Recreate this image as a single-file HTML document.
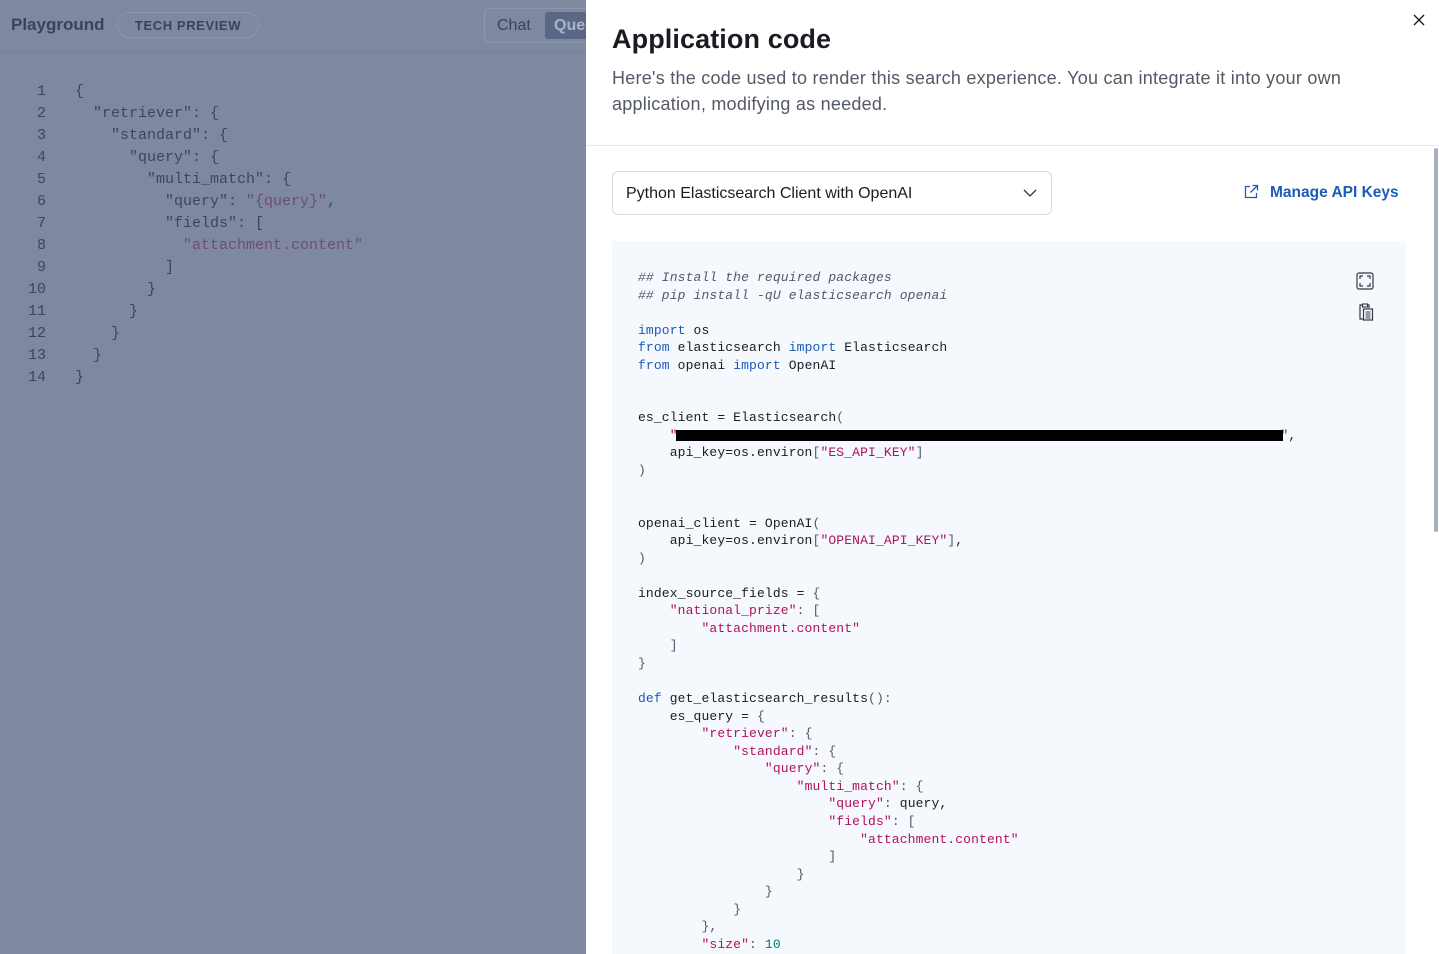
<!DOCTYPE html>
<html><head><meta charset="utf-8">
<style>
*{margin:0;padding:0;box-sizing:border-box}
html,body{width:1439px;height:954px;overflow:hidden}
body{position:relative;font-family:"Liberation Sans",sans-serif;background:#7e89a0}
.left{position:absolute;left:0;top:0;width:586px;height:954px;background:#7e89a0}
.hdr{position:absolute;left:0;top:0;width:586px;height:52px;border-bottom:1px solid #76819a}
.pg{position:absolute;left:11px;top:15px;font-size:17px;font-weight:bold;color:#3b4457}
.tp{position:absolute;left:117px;top:12px;width:142px;height:26px;border:1px solid #8c96ab;border-radius:13px;font-size:13px;font-weight:bold;letter-spacing:0.6px;color:#3b4457;text-align:center;line-height:25px}
.seg{position:absolute;left:484px;top:8px;width:110px;height:35px;border:1px solid #8c96ab;border-radius:5px}
.seg .c{position:absolute;left:12px;top:8px;font-size:16px;color:#3b4457}
.seg .q{position:absolute;left:60px;top:3px;width:50px;height:27px;background:#5a6785;border-radius:3px;color:#aab3c8;font-size:16px;padding:5px 9px;font-weight:bold}
.lc{position:absolute;left:0;top:81px;font-family:"Liberation Mono",monospace;font-size:15px;line-height:22px;color:#3d4659}
.ln{position:absolute;left:22px;width:24px;text-align:right;color:#3d4659}
.lcode{position:absolute;left:75px;white-space:pre;color:#3d4659}
.ls{color:#6d4d72}
.gut{position:absolute;left:59px;top:70px;width:1px;height:320px;background:#7a859c}
.panel{position:absolute;left:586px;top:0;width:853px;height:954px;background:#fff;overflow:hidden}
h1{position:absolute;left:26px;top:24px;font-size:27px;font-weight:bold;color:#1a1c21;letter-spacing:0.1px}
.sub{position:absolute;left:26px;top:65px;width:780px;font-size:18px;line-height:26px;color:#535966;letter-spacing:0.25px}
.close{position:absolute;left:826px;top:13px}
.div{position:absolute;left:0;top:145px;width:853px;height:1px;background:#e3e8f2}
.sel{position:absolute;left:26px;top:171px;width:440px;height:44px;border:1px solid #d3dae6;border-radius:6px;font-size:16px;color:#1a1c21;padding:13px 0 0 13px}
.chev{position:absolute;right:14px;top:16px}
.mk{position:absolute;left:684px;top:184px;font-size:15.5px;font-weight:bold;color:#1c5bb8;white-space:nowrap}
.mk svg{position:absolute;left:-27px;top:0}
.codebox{position:absolute;left:26px;top:241px;width:794px;height:713px;background:#f5f8fc;overflow:hidden}
pre{position:absolute;left:26px;top:28px;font-family:"Liberation Mono",monospace;font-size:13px;letter-spacing:0.13px;line-height:17.55px;color:#1a1c21}
.cm{color:#535966;font-style:italic}
.k{color:#1c5bb8}
.s{color:#b0125c}
.p{color:#535966}
.n{color:#007871}
.red{position:absolute;left:64px;top:189px;width:607px;height:11px;background:#000}
.ic1{position:absolute;left:744px;top:31px}
.ic2{position:absolute;left:746px;top:62px}
.sb{position:absolute;left:848px;top:148px;width:4px;height:384px;background:#a9b1c0;border-radius:2px}
</style></head><body>
<div class="left">
 <div class="hdr"></div>
 <div class="pg">Playground</div>
 <div class="tp">TECH PREVIEW</div>
 <div class="seg"><span class="c">Chat</span><span class="q">Query</span></div>
 <div class="gut"></div>
 <div class="lc">
  <div class="ln" style="top:0">1</div><div class="ln" style="top:22px">2</div><div class="ln" style="top:44px">3</div><div class="ln" style="top:66px">4</div><div class="ln" style="top:88px">5</div><div class="ln" style="top:110px">6</div><div class="ln" style="top:132px">7</div><div class="ln" style="top:154px">8</div><div class="ln" style="top:176px">9</div><div class="ln" style="top:198px">10</div><div class="ln" style="top:220px">11</div><div class="ln" style="top:242px">12</div><div class="ln" style="top:264px">13</div><div class="ln" style="top:286px">14</div>
  <div class="lcode">{
  "retriever": {
    "standard": {
      "query": {
        "multi_match": {
          "query": <span class="ls">"{query}"</span>,
          "fields": [
            <span class="ls">"attachment.content"</span>
          ]
        }
      }
    }
  }
}</div>
 </div>
</div>
<div class="panel">
 <h1>Application code</h1>
 <div class="sub">Here's the code used to render this search experience. You can integrate it into your own application, modifying as needed.</div>
 <svg class="close" width="14" height="14" viewBox="0 0 14 14"><path d="M2 2L12 12M12 2L2 12" stroke="#1a1c21" stroke-width="1.4"/></svg>
 <div class="div"></div>
 <div class="sel">Python Elasticsearch Client with OpenAI
  <svg class="chev" width="14" height="10" viewBox="0 0 14 10"><path d="M1 2L7 8L13 2" fill="none" stroke="#343741" stroke-width="1.3"/></svg></div>
 <div class="mk"><svg width="16" height="16" viewBox="0 0 16 16"><path d="M7 2.5H2.5V13.5H13.5V9" fill="none" stroke="#1c5bb8" stroke-width="1.3"/><path d="M9.5 1.5H14.5V6.5M14.5 1.5L7.5 8.5" fill="none" stroke="#1c5bb8" stroke-width="1.3"/></svg>Manage API Keys</div>
 <div class="codebox">
  <svg class="ic1" width="18" height="18" viewBox="0 0 18 18"><rect x="1" y="1" width="16" height="16" rx="2" fill="none" stroke="#343741" stroke-width="1.2"/><path d="M4 7V4H7M11 4H14V7M14 11V14H11M7 14H4V11" fill="none" stroke="#343741" stroke-width="1.2"/></svg>
  <svg class="ic2" width="16" height="18" viewBox="0 0 16 18"><path d="M4 2H2V16H5" fill="none" stroke="#343741" stroke-width="1.2"/><rect x="4.5" y="1" width="5" height="3" fill="none" stroke="#343741" stroke-width="1.1"/><path d="M9 2H11V5" fill="none" stroke="#343741" stroke-width="1.2"/><rect x="5.5" y="6" width="9" height="11" fill="#fff" stroke="#343741" stroke-width="1.2"/><path d="M7.5 9H12.5M7.5 11H12.5M7.5 13H12.5M7.5 15H12.5" stroke="#343741" stroke-width="1"/></svg>
<pre><span class="cm">## Install the required packages
## pip install -qU elasticsearch openai</span>

<span class="k">import</span> os
<span class="k">from</span> elasticsearch <span class="k">import</span> Elasticsearch
<span class="k">from</span> openai <span class="k">import</span> OpenAI


es_client = Elasticsearch<span class="p">(</span>
    <span class="s">"</span>                                                                            <span class="s">"</span>,
    api_key=os.environ<span class="p">[</span><span class="s">"ES_API_KEY"</span><span class="p">]</span>
<span class="p">)</span>


openai_client = OpenAI<span class="p">(</span>
    api_key=os.environ<span class="p">[</span><span class="s">"OPENAI_API_KEY"</span><span class="p">]</span>,
<span class="p">)</span>

index_source_fields = <span class="p">{</span>
    <span class="s">"national_prize"</span><span class="p">: [</span>
        <span class="s">"attachment.content"</span>
    <span class="p">]</span>
<span class="p">}</span>

<span class="k">def</span> get_elasticsearch_results<span class="p">():</span>
    es_query = <span class="p">{</span>
        <span class="s">"retriever"</span><span class="p">: {</span>
            <span class="s">"standard"</span><span class="p">: {</span>
                <span class="s">"query"</span><span class="p">: {</span>
                    <span class="s">"multi_match"</span><span class="p">: {</span>
                        <span class="s">"query"</span><span class="p">:</span> query,
                        <span class="s">"fields"</span><span class="p">: [</span>
                            <span class="s">"attachment.content"</span>
                        <span class="p">]</span>
                    <span class="p">}</span>
                <span class="p">}</span>
            <span class="p">}</span>
        <span class="p">},</span>
        <span class="s">"size"</span><span class="p">:</span> <span class="n">10</span>
    }</pre>
  <div class="red"></div>
 </div>
 <div class="sb"></div>
</div>
</body></html>
